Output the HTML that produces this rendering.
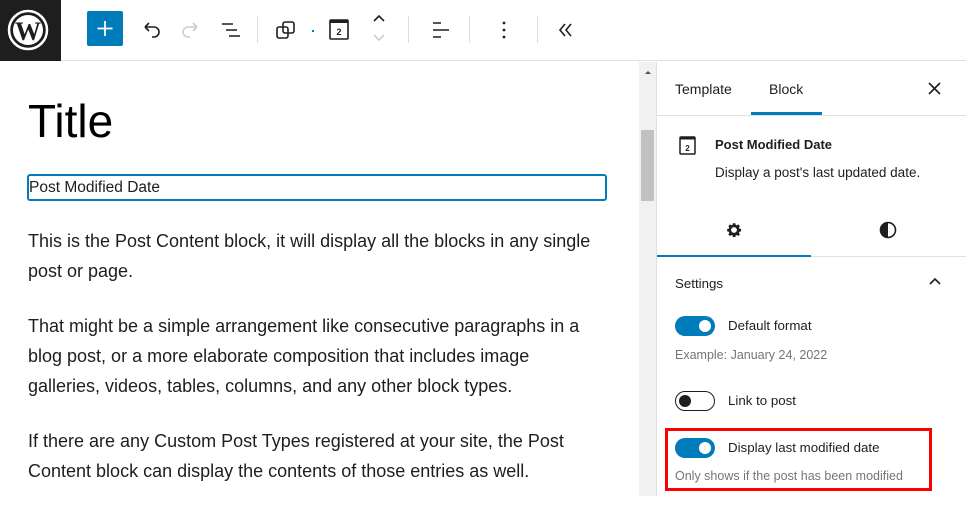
<!DOCTYPE html>
<html><head><meta charset="utf-8"><style>
*{box-sizing:border-box;margin:0;padding:0}
body{width:966px;height:496px;overflow:hidden;background:#fff;font-family:"Liberation Sans",sans-serif;color:#1e1e1e;position:relative}
.top{position:absolute;left:0;top:0;width:966px;height:61px;border-bottom:1px solid #e0e0e0;background:#fff}
.wp{position:absolute;left:0;top:0;width:61px;height:61px;background:#1e1e1e}
.abs{position:absolute}
.sep{position:absolute;top:16px;width:1px;height:27px;background:#ddd}
.editor p{font-size:18px;line-height:30px;color:#1e1e1e;margin-bottom:25px;white-space:nowrap}
.side{position:absolute;left:656px;top:62px;width:310px;height:434px;border-left:1px solid #e0e0e0;background:#fff}
.tog{position:absolute;width:40px;height:20px;border-radius:10px;background:#007cba}
.tog::after{content:"";position:absolute;right:4px;top:4px;width:12px;height:12px;border-radius:50%;background:#fff}
.tog.off{background:#fff;border:1px solid #1e1e1e}
.tog.off::after{left:3px;top:3px;right:auto;background:#1e1e1e}
.lbl{position:absolute;font-size:13.3px;color:#1e1e1e;white-space:nowrap}
.help{position:absolute;font-size:12.5px;color:#757575;white-space:nowrap}
</style></head><body>
<div class="top">
 <div class="wp"><svg width="61" height="61" viewBox="0 0 61 61"><circle cx="28" cy="30" r="19" fill="none" stroke="#fff" stroke-width="2.5"/><circle cx="28" cy="30" r="15" fill="#fff"/><text x="28" y="40" text-anchor="middle" font-family="Liberation Serif" font-weight="bold" font-size="26" fill="#1e1e1e">W</text></svg></div>
 <div class="abs" style="left:87px;top:11px;width:36px;height:35px;background:#007cba;border-radius:2px"><svg width="36" height="35"><path d="M18 10v15M10.5 17.5h15" stroke="#fff" stroke-width="1.8"/></svg></div>
 <svg class="abs" style="left:140px;top:18px" width="24" height="24"><path d="M5 9h9a5 5 0 0 1 0 10h-2M5 9l4-4M5 9l4 4" fill="none" stroke="#1e1e1e" stroke-width="1.6"/></svg>
 <svg class="abs" style="left:178px;top:18px" width="24" height="24"><path d="M19 9h-9a5 5 0 0 0 0 10h2M19 9l-4-4M19 9l-4 4" fill="none" stroke="#ccc" stroke-width="1.6"/></svg>
 <svg class="abs" style="left:219px;top:18px" width="24" height="24"><path d="M3 6h11M7 12h11M10 18h11" stroke="#1e1e1e" stroke-width="1.6"/></svg>
 <div class="sep" style="left:257px"></div>
 <svg class="abs" style="left:274px;top:18px" width="24" height="24"><rect x="3" y="9" width="11" height="11" rx="2" fill="none" stroke="#1e1e1e" stroke-width="1.6"/><rect x="9" y="4" width="11" height="11" rx="2" fill="none" stroke="#1e1e1e" stroke-width="1.6"/></svg>
 <div class="abs" style="left:312px;top:30px;width:2px;height:2px;background:#007cba"></div>
 <svg class="abs" style="left:327px;top:17px" width="24" height="24"><rect x="3" y="3" width="18" height="19" rx="1" fill="none" stroke="#1e1e1e" stroke-width="1.6"/><rect x="3" y="3" width="18" height="3" fill="#1e1e1e"/><text x="12" y="18" text-anchor="middle" font-size="9" font-weight="bold" fill="#1e1e1e">2</text></svg>
 <svg class="abs" style="left:369px;top:12px" width="20" height="34"><path d="M5 9l5-5 5 5" fill="none" stroke="#1e1e1e" stroke-width="1.6"/><path d="M5 23l5 5 5-5" fill="none" stroke="#ccc" stroke-width="1.6"/></svg>
 <div class="sep" style="left:408px"></div>
 <svg class="abs" style="left:429px;top:18px" width="24" height="24"><path d="M4 5h8M4 12h16M4 19h8" stroke="#1e1e1e" stroke-width="1.6"/></svg>
 <div class="sep" style="left:469px"></div>
 <svg class="abs" style="left:494px;top:18px" width="20" height="24"><circle cx="10" cy="5" r="1.4" fill="#1e1e1e"/><circle cx="10" cy="12" r="1.4" fill="#1e1e1e"/><circle cx="10" cy="19" r="1.4" fill="#1e1e1e"/></svg>
 <div class="sep" style="left:537px"></div>
 <svg class="abs" style="left:555px;top:18px" width="24" height="24"><path d="M10 6l-5 6 5 6M16 6l-5 6 5 6" fill="none" stroke="#1e1e1e" stroke-width="1.6"/></svg>
</div>

<div class="editor abs" style="left:28px;top:62px">
 <div style="font-size:46px;line-height:54px;margin-top:32px;color:#000">Title</div>
 <div style="position:absolute;left:-1px;top:112px;width:580px;height:27px;border:2px solid #007cba;border-radius:3px;font-size:15.5px;line-height:23px;color:#1e1e1e">Post Modified Date</div>
 <div style="position:absolute;top:164px;width:590px">
  <p>This is the Post Content block, it will display all the blocks in any single<br>post or page.</p>
  <p>That might be a simple arrangement like consecutive paragraphs in a<br>blog post, or a more elaborate composition that includes image<br>galleries, videos, tables, columns, and any other block types.</p>
  <p>If there are any Custom Post Types registered at your site, the Post<br>Content block can display the contents of those entries as well.</p>
 </div>
</div>

<div class="abs" style="left:639px;top:62px;width:17px;height:434px;background:#f1f1f1"></div>
<div class="abs" style="left:641px;top:130px;width:13px;height:71px;background:#c1c1c1"></div>
<svg class="abs" style="left:642px;top:68px" width="12" height="8"><path d="M3 6l3-3 3 3z" fill="#505050"/></svg>

<div class="side">
 <div class="lbl" style="left:18px;top:19px;font-size:14px">Template</div>
 <div class="lbl" style="left:112px;top:19px;font-size:14px">Block</div>
 <div class="abs" style="left:94px;top:50px;width:71px;height:3px;background:#007cba"></div>
 <svg class="abs" style="left:268px;top:17px" width="20" height="20"><path d="M4 4l11 11M15 4L4 15" stroke="#1e1e1e" stroke-width="1.6"/></svg>
 <div class="abs" style="left:0;top:53px;width:310px;height:1px;background:#e0e0e0"></div>
 <svg class="abs" style="left:20px;top:72px" width="22" height="24"><rect x="3" y="3" width="15" height="17" rx="1" fill="none" stroke="#1e1e1e" stroke-width="1.5"/><rect x="3" y="3" width="15" height="2.5" fill="#1e1e1e"/><text x="10.5" y="17" text-anchor="middle" font-size="8" font-weight="bold" fill="#1e1e1e">2</text></svg>
 <div class="lbl" style="left:58px;top:75px;font-size:13px;font-weight:bold">Post Modified Date</div>
 <div class="lbl" style="left:58px;top:103px;font-size:13.5px">Display a post's last updated date.</div>
 <svg class="abs" style="left:67px;top:158px" width="20" height="20" viewBox="0 0 24 24"><path fill="#1e1e1e" d="M12 8.5a3.5 3.5 0 1 0 0 7 3.5 3.5 0 0 0 0-7zm8.5 5.2l-2 .4-.6 1.4 1.2 1.7-2 2-1.7-1.2-1.4.6-.4 2h-2.9l-.4-2-1.4-.6-1.7 1.2-2-2 1.2-1.7-.6-1.4-2-.4v-2.9l2-.4.6-1.4-1.2-1.7 2-2 1.7 1.2 1.4-.6.4-2h2.9l.4 2 1.4.6 1.7-1.2 2 2-1.2 1.7.6 1.4 2 .4z"/><circle cx="12" cy="12" r="2.2" fill="#fff"/></svg>
 <svg class="abs" style="left:221px;top:158px" width="20" height="20"><circle cx="10" cy="10" r="7.5" fill="none" stroke="#1e1e1e" stroke-width="1.6"/><path d="M10 2.5a7.5 7.5 0 0 0 0 15z" fill="#1e1e1e"/></svg>
 <div class="abs" style="left:0;top:193px;width:154px;height:2px;background:#007cba"></div>
 <div class="abs" style="left:154px;top:194px;width:156px;height:1px;background:#e0e0e0"></div>
 <div class="lbl" style="left:18px;top:214px">Settings</div>
 <svg class="abs" style="left:268px;top:212px" width="20" height="16"><path d="M5 10l5-5 5 5" fill="none" stroke="#1e1e1e" stroke-width="1.6"/></svg>
 <div class="tog" style="left:18px;top:254px"></div>
 <div class="lbl" style="left:71px;top:256px">Default format</div>
 <div class="help" style="left:18px;top:286px">Example: January 24, 2022</div>
 <div class="tog off" style="left:18px;top:329px"></div>
 <div class="lbl" style="left:71px;top:331px">Link to post</div>
 <div class="tog" style="left:18px;top:376px"></div>
 <div class="lbl" style="left:71px;top:378px">Display last modified date</div>
 <div class="help" style="left:18px;top:407px">Only shows if the post has been modified</div>
 <div class="abs" style="left:8px;top:366px;width:267px;height:63px;border:3px solid #f00"></div>
</div>
</body></html>
